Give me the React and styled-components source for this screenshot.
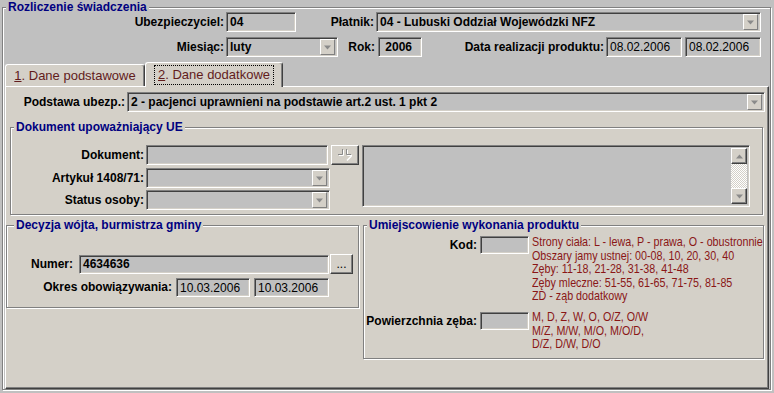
import React from "react";
import styled, { createGlobalStyle } from "styled-components";

const GlobalStyle = createGlobalStyle`
  html, body {
    margin: 0;
    padding: 0;
  }
  body {
    width: 774px;
    height: 393px;
    overflow: hidden;
    background: #c0c0c0;
    font-family: "Liberation Sans", Arial, sans-serif;
    font-size: 12px;
    color: #000;
  }
`;

const Page = styled.div`
  padding: 7px 0 0 2px;
`;

const Group = styled.div`
  box-sizing: border-box;
  flex: none;
  width: ${(p) => p.$w}px;
  height: ${(p) => p.$h}px;
  margin: ${(p) => p.$m || 0};
  background: ${(p) => p.$bg};
  border: 1px solid #808080;
  box-shadow: inset 1px 1px 0 #fff, 1px 1px 0 #fff;
`;

const GroupTitle = styled.div`
  width: fit-content;
  height: 14px;
  margin: -8px 0 0 ${(p) => p.$ml ?? 3}px;
  padding: 0 2px;
  line-height: 14px;
  background: ${(p) => p.$bg};
  color: #000080;
  font-weight: bold;
  font-size: 12px;
  white-space: nowrap;
`;

const Row = styled.div`
  display: flex;
  align-items: ${(p) => p.$align || "center"};
  margin: ${(p) => p.$m || 0};
`;

const Label = styled.span`
  box-sizing: border-box;
  flex: none;
  width: ${(p) => p.$w}px;
  margin-right: ${(p) => p.$mr ?? 2}px;
  line-height: ${(p) => p.$lh || 20}px;
  text-align: right;
  font-weight: bold;
  white-space: nowrap;
`;

const Field = styled.div`
  box-sizing: border-box;
  flex: none;
  display: flex;
  align-items: center;
  width: ${(p) => p.$w}px;
  height: ${(p) => p.$h || 20}px;
  margin-left: ${(p) => p.$ml || 0}px;
  padding: 0 2px 0 3px;
  background: #c0c0c0;
  border: 1px solid;
  border-color: #808080 #fff #fff #808080;
  box-shadow: inset 1px 1px 0 #404040, inset -1px -1px 0 #d4d0c8;
  font-weight: ${(p) => (p.$bold ? "bold" : "normal")};
  white-space: nowrap;
  overflow: hidden;
`;

const FieldText = styled.span`
  flex: 1;
  overflow: hidden;
`;

const DropButton = styled.span`
  box-sizing: border-box;
  flex: none;
  width: 15px;
  height: ${(p) => p.$h || 16}px;
  display: flex;
  align-items: center;
  justify-content: center;
  background: #d4d0c8;
  border: 1px solid;
  border-color: #fff #808080 #808080 #fff;
`;

const Button = styled.div`
  box-sizing: border-box;
  flex: none;
  display: flex;
  align-items: center;
  justify-content: center;
  width: ${(p) => p.$w}px;
  height: ${(p) => p.$h || 20}px;
  margin-left: ${(p) => p.$ml || 0}px;
  background: #d4d0c8;
  border: 1px solid;
  border-color: #fff #404040 #404040 #fff;
  box-shadow: inset -1px -1px 0 #808080;
  font-size: 12px;
  line-height: 1;
`;

const TabStrip = styled.div`
  display: flex;
  align-items: flex-end;
  height: 24px;
  margin: 5px 0 0 2px;
`;

const Tab = styled.div`
  box-sizing: border-box;
  position: relative;
  z-index: ${(p) => (p.$active ? 1 : 0)};
  display: flex;
  align-items: center;
  justify-content: center;
  width: ${(p) => p.$w}px;
  height: ${(p) => (p.$active ? 25 : 22)}px;
  margin-bottom: ${(p) => (p.$active ? -1 : 0)}px;
  background: #d4d0c8;
  border: 1px solid;
  border-color: #fff #404040 transparent #fff;
  border-bottom: none;
  border-radius: 3px 3px 0 0;
  box-shadow: inset -1px 0 0 #808080;
  color: #621c1c;
  font-size: 13px;
  white-space: nowrap;
`;

const Focus = styled.span`
  padding: 1px 3px 2px;
  border: 1px dotted ${(p) => (p.$on ? "#000" : "transparent")};
`;

const Panel = styled.div`
  box-sizing: border-box;
  width: 764px;
  height: 303px;
  margin-left: 2px;
  background: #d4d0c8;
  border: 1px solid;
  border-color: #fff #404040 #404040 #fff;
  box-shadow: inset -1px -1px 0 #808080;
  overflow: hidden;
`;

const Column = styled.div`
  display: flex;
  flex-direction: column;
`;

const MemoBox = styled(Field)`
  align-items: stretch;
  justify-content: flex-end;
  padding: 2px;
`;

const ScrollBar = styled.div`
  width: 16px;
  display: flex;
  flex-direction: column;
  justify-content: space-between;
  background: repeating-conic-gradient(#d4d0c8 0 25%, #fff 0 50%) 0 0 / 2px 2px;
`;

const ScrollButton = styled.div`
  box-sizing: border-box;
  width: 16px;
  height: 16px;
  display: flex;
  align-items: center;
  justify-content: center;
  background: #d4d0c8;
  border: 1px solid;
  border-color: #fff #404040 #404040 #fff;
  box-shadow: inset -1px -1px 0 #808080;
`;

/* the original uses a narrow face; squeeze Arial-metric text to match */
const Hint = styled.div`
  margin: ${(p) => p.$mt}px 0 0 3px;
  color: #8a1616;
  font-family: "Liberation Sans", Arial, sans-serif;
  font-size: 13px;
  line-height: 13.6px;
  white-space: nowrap;
  transform: scaleX(0.825);
  transform-origin: left top;
`;

const Arrow = ({ up }) => (
  <svg width="7" height="5" viewBox="0 0 7 5">
    <path
      d={up ? "M3.5 0.5 L7 4.5 L0 4.5 Z" : "M0 0.5 L7 0.5 L3.5 4.5 Z"}
      fill="#8a8a8a"
    />
  </svg>
);

const Combo = ({ w, h, bold, children }) => (
  <Field $w={w} $h={h} $bold={bold}>
    <FieldText>{children}</FieldText>
    <DropButton $h={h ? h - 4 : 16}>
      <Arrow />
    </DropButton>
  </Field>
);

const LookupIcon = () => (
  <svg width="18" height="14" viewBox="0 0 18 14">
    <g fill="none" strokeWidth="1">
      <path d="M2 6.5 H6.5 V1" stroke="#fff" transform="translate(1 1)" />
      <path d="M2 6.5 H6.5 V1" stroke="#8a8a8a" />
      <path d="M10.5 1 V6.5 H15" stroke="#fff" transform="translate(1 1)" />
      <path d="M10.5 1 V6.5 H15" stroke="#8a8a8a" />
      <path d="M11 12.5 L15.5 8" stroke="#fff" strokeWidth="1.4" />
    </g>
  </svg>
);

const kodHints = [
  "Strony ciała: L - lewa, P - prawa, O - obustronnie",
  "Obszary jamy ustnej: 00-08, 10, 20, 30, 40",
  "Zęby: 11-18, 21-28, 31-38, 41-48",
  "Zęby mleczne: 51-55, 61-65, 71-75, 81-85",
  "ZD - ząb dodatkowy",
];

const surfaceHints = ["M, D, Z, W, O, O/Z, O/W", "M/Z, M/W, M/O, M/O/D,", "D/Z, D/W, D/O"];

export default function App() {
  return (
    <Page>
      <GlobalStyle />
      <Group $w={769} $h={383} $bg="#c0c0c0">
        <GroupTitle $bg="#c0c0c0">Rozliczenie świadczenia</GroupTitle>

        <Row $m="-2px 0 0 0">
          <Label $w={221}>Ubezpieczyciel:</Label>
          <Field $w={70} $bold>04</Field>
          <Label $w={78}>Płatnik:</Label>
          <Combo w={385} bold>
            04 - Lubuski Oddział Wojewódzki NFZ
          </Combo>
        </Row>

        <Row $m="5px 0 0 0">
          <Label $w={221}>Miesiąc:</Label>
          <Combo w={112} bold>
            luty
          </Combo>
          <Label $w={37} $mr={3}>Rok:</Label>
          <Field $w={44} $bold>
            &nbsp;2006
          </Field>
          <Label $w={182}>Data realizacji produktu:</Label>
          <Field $w={76}>08.02.2006</Field>
          <Field $w={76} $ml={3}>
            08.02.2006
          </Field>
        </Row>

        <TabStrip>
          <Tab $w={140}>
            <Focus>
              <u>1</u>. Dane podstawowe
            </Focus>
          </Tab>
          <Tab $w={138} $active>
            <Focus $on>
              <u>2</u>. Dane dodatkowe
            </Focus>
          </Tab>
        </TabStrip>

        <Panel>
          <Row $m="5px 0 0 0">
            <Label $w={119}>Podstawa ubezp.:</Label>
            <Combo w={638} bold>
              2 - pacjenci uprawnieni na podstawie art.2 ust. 1 pkt 2
            </Combo>
          </Row>

          <Group $w={753} $h={88} $m="15px 0 0 4px" $bg="#d4d0c8">
            <GroupTitle $bg="#d4d0c8">Dokument upoważniający UE</GroupTitle>
            <Row $align="flex-start" $m="11px 0 0 0">
              <Column>
                <Row>
                  <Label $w={133}>Dokument:</Label>
                  <Field $w={182} />
                  <Button $w={28} $ml={3}>
                    <LookupIcon />
                  </Button>
                </Row>
                <Row $m="3px 0 0 0">
                  <Label $w={133}>Artykuł 1408/71:</Label>
                  <Combo w={184} />
                </Row>
                <Row $m="2px 0 0 0">
                  <Label $w={133}>Status osoby:</Label>
                  <Combo w={184} />
                </Row>
              </Column>
              <MemoBox $w={388} $h={62} $ml={3}>
                <ScrollBar>
                  <ScrollButton>
                    <Arrow up />
                  </ScrollButton>
                  <ScrollButton>
                    <Arrow />
                  </ScrollButton>
                </ScrollBar>
              </MemoBox>
            </Row>
          </Group>

          <Row $align="flex-start" $m="10px 0 0 0">
            <Group $w={353} $h={83} $bg="#d4d0c8">
              <GroupTitle $bg="#d4d0c8" $ml={7}>
                Decyzja wójta, burmistrza gminy
              </GroupTitle>
              <Row $m="22px 0 0 0">
                <Label $w={66} $mr={6} $lh={19}>
                  Numer:
                </Label>
                <Field $w={250} $h={19} $bold>
                  4634636
                </Field>
                <Button $w={23} $h={20} $ml={1}>
                  ...
                </Button>
              </Row>
              <Row $m="4px 0 0 0">
                <Label $w={165} $mr={4} $lh={19}>
                  Okres obowiązywania:
                </Label>
                <Field $w={74} $h={19}>
                  10.03.2006
                </Field>
                <Field $w={75} $h={19} $ml={4}>
                  10.03.2006
                </Field>
              </Row>
            </Group>

            <Group $w={401} $h={134} $m="0 0 0 4px" $bg="#d4d0c8">
              <GroupTitle $bg="#d4d0c8">Umiejscowienie wykonania produktu</GroupTitle>
              <Row $align="flex-start" $m="4px 0 0 0">
                <Label $w={113} $mr={3} $lh={18}>
                  Kod:
                </Label>
                <Field $w={49} $h={18} />
                <Hint $mt={-1}>
                  {kodHints.map((line) => (
                    <div key={line}>{line}</div>
                  ))}
                </Hint>
              </Row>
              <Row $align="flex-start" $m="9px 0 0 0">
                <Label $w={113} $mr={3} $lh={18}>
                  Powierzchnia zęba:
                </Label>
                <Field $w={49} $h={18} />
                <Hint $mt={-2}>
                  {surfaceHints.map((line) => (
                    <div key={line}>{line}</div>
                  ))}
                </Hint>
              </Row>
            </Group>
          </Row>
        </Panel>
      </Group>
    </Page>
  );
}
